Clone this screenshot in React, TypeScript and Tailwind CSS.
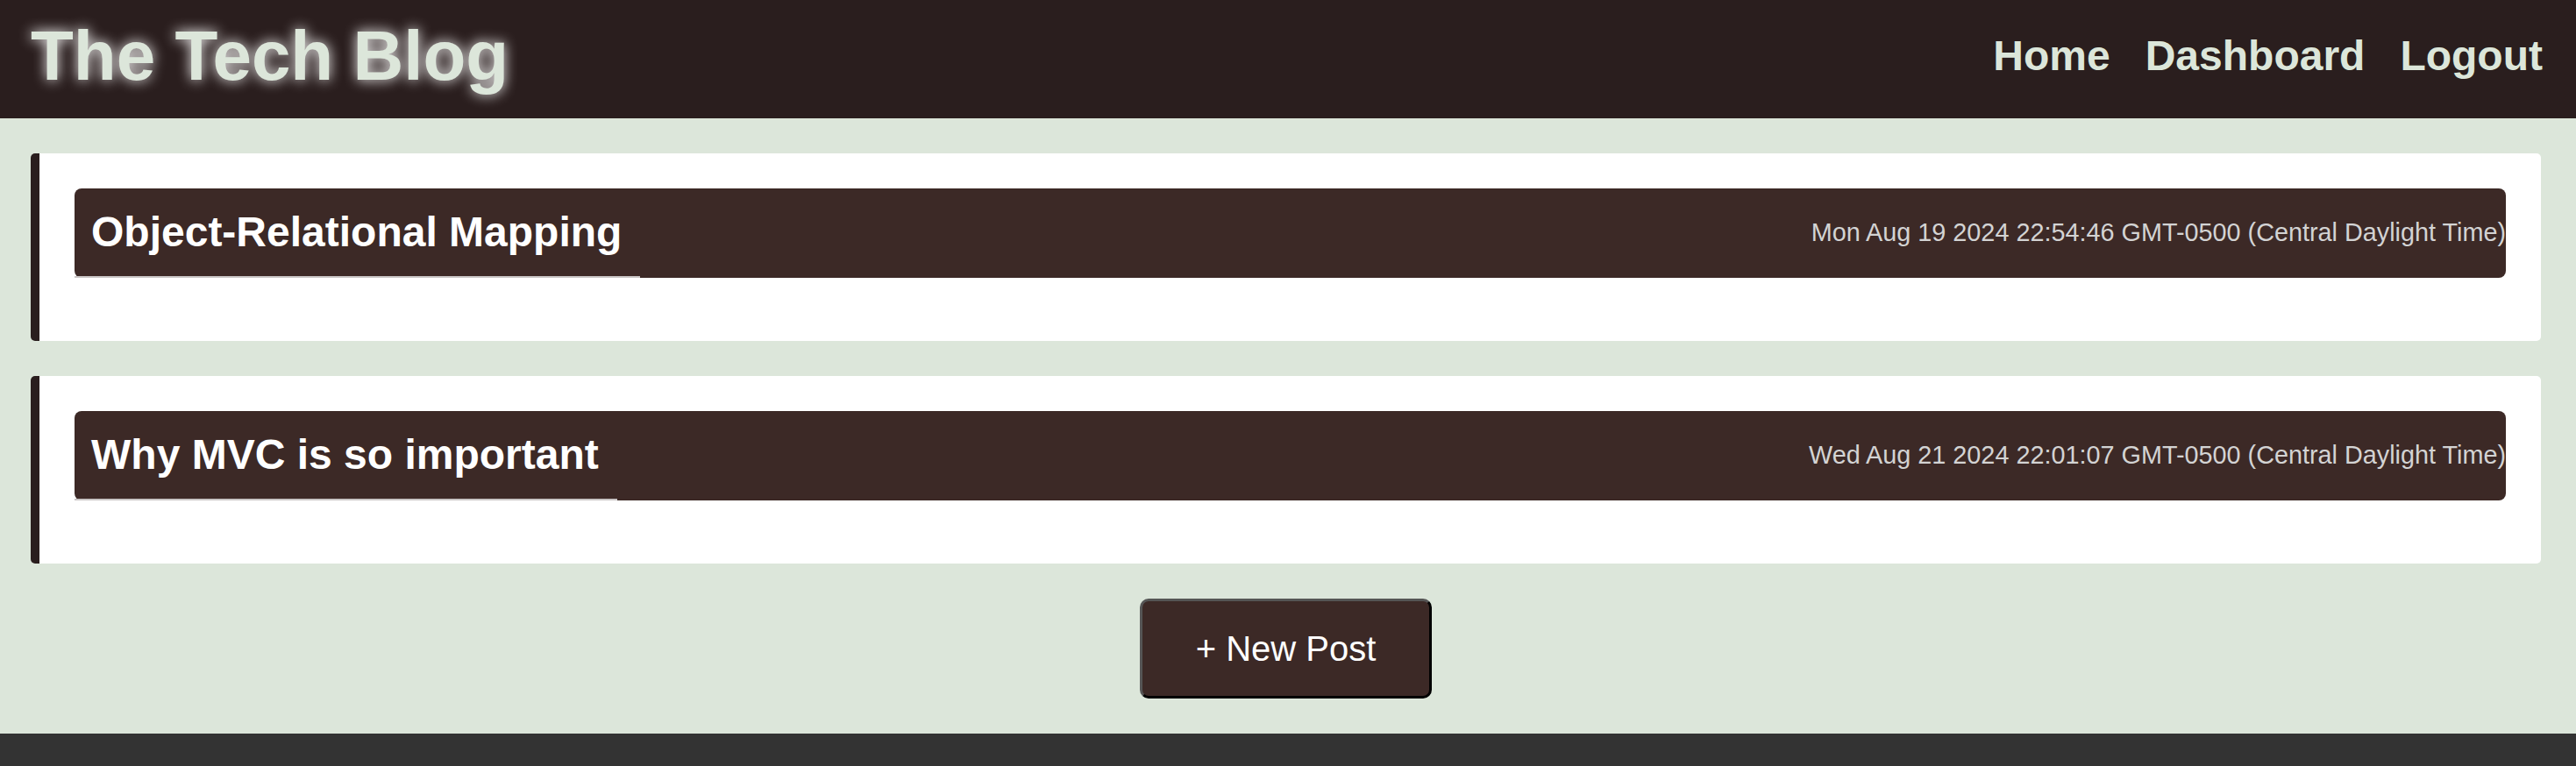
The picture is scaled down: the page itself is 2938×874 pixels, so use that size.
import React from "react";

interface post {
  title: string;
  date: string;
}

const posts: post[] = [
  {
    title: "Object-Relational Mapping",
    date: "Mon Aug 19 2024 22:54:46 GMT-0500 (Central Daylight Time)",
  },
  {
    title: "Why MVC is so important",
    date: "Wed Aug 21 2024 22:01:07 GMT-0500 (Central Daylight Time)",
  },
];

const PostCard = ({ item }: { item: post }) => {
  return (
    <div className="rounded-[5px] border-l-[10px] border-[#2a1e1e] bg-white px-[40px] pt-[40px] pb-[40px]">
      <div className="flex h-[102px] items-stretch justify-between rounded-[8px] bg-[#3c2926]">
        <h2 className="flex items-center border-b-[2px] border-[#c9c5c5] pl-[19px] pr-[21px] text-[48px] font-bold text-white">
          {item.title}
        </h2>
        <span className="flex items-center text-[28.8px] text-[#d3d3d3]">
          {item.date}
        </span>
      </div>
      <div className="h-[32px]" />
    </div>
  );
};

const App = () => {
  return (
    <div className="flex min-h-screen flex-col bg-[#dce6da] font-['Liberation_Sans',Arial,sans-serif]">
      <header className="flex h-[135px] items-center justify-between bg-[#2a1e1e] pb-[8px] pl-[35px] pr-[38px]">
        <h1 className="text-[80px] font-bold leading-none text-[#dce6da] [text-shadow:0_0_15px_#ffffff]">
          The Tech Blog
        </h1>
        <nav className="flex gap-[40px] text-[48px] font-bold leading-none text-[#dce6da]">
          <a href="#">Home</a>
          <a href="#">Dashboard</a>
          <a href="#">Logout</a>
        </nav>
      </header>

      <main className="flex flex-col gap-[40px] py-[40px] pl-[35px] pr-[40px]">
        {posts.map((item) => (
          <PostCard item={item} key={item.title} />
        ))}
        <div className="flex justify-center">
          <button className="h-[114px] w-[333px] rounded-[10px] border-[3px] border-t-[#555555] border-l-[#555555] border-r-black border-b-black bg-[#3c2926] text-[40px] text-white">
            + New Post
          </button>
        </div>
      </main>

      <footer className="h-[37px] bg-[#333333]" />
    </div>
  );
};

export default App;
